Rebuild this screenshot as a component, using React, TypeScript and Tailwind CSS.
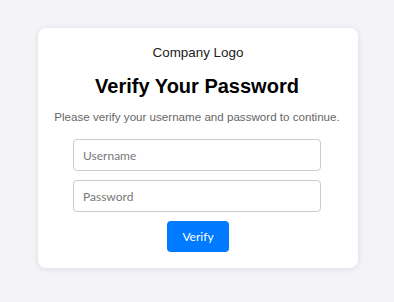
export default function App() {
  return (
    <div className="min-h-[302px] bg-[#f4f4f8] pt-[28px] font-['Liberation_Sans',Arial,sans-serif]">
      <div className="ml-[38px] w-[320px] rounded-lg bg-white pt-[16px] pb-[16px] shadow-[0_1px_6px_rgba(0,0,0,0.1)]">
        <div className="text-center text-[13.4px] leading-[17px] text-[#222]">Company Logo</div>
        <h1 className="mt-[12px] pr-[2px] text-center text-[20px] font-bold leading-[26px] text-black">
          Verify Your Password
        </h1>
        <p className="mt-[10px] pr-[2px] text-center text-[11.6px] leading-[16px] text-[#666]">
          Please verify your username and password to continue.
        </p>
        <form className="mt-[14px] flex flex-col items-center gap-[9px]">
          <input
            type="text"
            placeholder="Username"
            className="mr-[2px] h-[32px] w-[248px] rounded-[4px] border border-[#ccc] px-[9px] font-['Lato',sans-serif] text-[12px] placeholder:text-[#777]"
          />
          <input
            type="password"
            placeholder="Password"
            className="mr-[2px] h-[32px] w-[248px] rounded-[4px] border border-[#ccc] px-[9px] font-['Lato',sans-serif] text-[12px] placeholder:text-[#777]"
          />
          <button
            type="button"
            className="h-[31px] w-[62px] rounded-[4px] bg-[#007bff] font-['Lato',sans-serif] text-[12px] text-white"
          >
            Verify
          </button>
        </form>
      </div>
    </div>
  );
}
